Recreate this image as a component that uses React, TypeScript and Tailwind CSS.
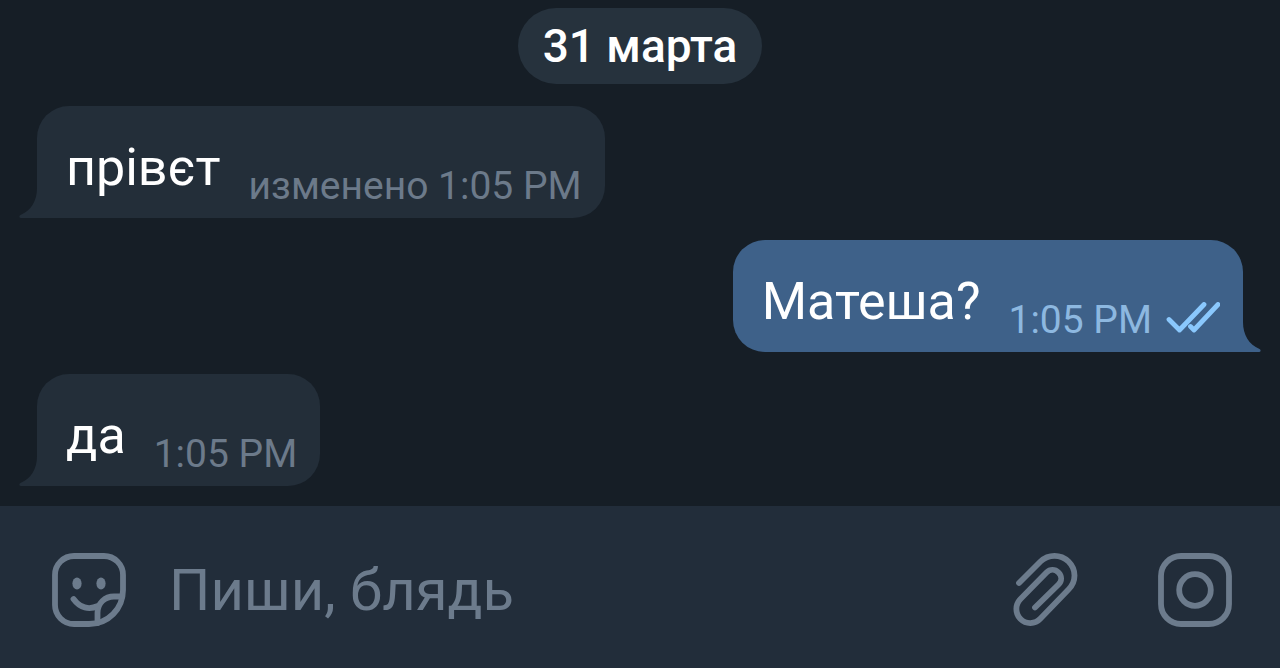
import { useState } from 'react';

interface Message {
  id: number;
  text: string;
  time: string;
  own?: boolean;
  edited?: boolean;
}

const messages: Message[] = [
  { id: 1, text: 'прівєт', time: '1:05 PM', edited: true },
  { id: 2, text: 'Матеша?', time: '1:05 PM', own: true },
  { id: 3, text: 'да', time: '1:05 PM' },
];

function ReadChecks() {
  return (
    <svg width="54" height="32" viewBox="0 0 54 32" fill="none" stroke="#8ac8fd" strokeWidth="4.8" strokeLinecap="round" strokeLinejoin="round" className="mb-[18px] ml-3.5" role="img" aria-label="Прочитано">
      <path d="M3 17.5L13.5 28L38 2.5" />
      <path d="M24.5 24.5L28 28L52 2.5" />
    </svg>
  );
}

// curved corner hanging off the bottom of a bubble
function Tail({ own }: { own?: boolean }) {
  return (
    <svg width="20" height="42" viewBox="0 0 20 42" fill={own ? '#3e6189' : '#232e39'} aria-hidden="true"
      className={own ? 'absolute bottom-0 left-full -ml-px -scale-x-100' : 'absolute bottom-0 right-full -mr-px'}>
      <path d="M20 0V42H3C1 42 0.8 39.8 2.5 39C13 34.500 19 25 19 12V0Z" />
    </svg>
  );
}

function Bubble({ msg }: { msg: Message }) {
  return (
    <li className={msg.own
      ? 'relative flex items-end self-end mr-[37px] pl-[29px] pr-[23px] rounded-[32px] rounded-br-none bg-[#3e6189]'
      : 'relative flex items-end self-start ml-[37px] pl-[29px] pr-[23px] rounded-[32px] rounded-bl-none bg-[#232e39]'}>
      <Tail own={msg.own} />
      <p className="pt-8 pb-5 text-[52px] leading-[60px] text-white">{msg.text}</p>
      <span className={msg.own
        ? 'ml-7 pb-2 text-[39px] leading-[48px] text-[#8db8e0]'
        : 'ml-7 pb-2 text-[39px] leading-[48px] text-[#6c7a8a]'}>
        {msg.edited && 'изменено '}{msg.time}
      </span>
      {msg.own && <ReadChecks />}
    </li>
  );
}

function StickerIcon() {
  return (
    <svg width="76" height="76" viewBox="0 0 76 76" fill="none" stroke="currentColor" strokeWidth="5.8" strokeLinecap="round" strokeLinejoin="round">
      <path d="M23 4H53A19 19 0 0 1 72 23V38C72 57 57 72 38 72H23A19 19 0 0 1 4 53V23A19 19 0 0 1 23 4Z" />
      <path d="M46.500 71V61C46.500 51 54 44.500 63 44.500H71" />
      <path d="M22.500 47C29 56 38 58 47 54" />
      <ellipse cx="26" cy="31.500" rx="4.600" ry="6" fill="currentColor" stroke="none" />
      <ellipse cx="50" cy="31.500" rx="4.600" ry="6" fill="currentColor" stroke="none" />
    </svg>
  );
}

function ClipIcon() {
  return (
    <svg width="68" height="76" viewBox="0 0 68 76" fill="none" stroke="currentColor" strokeWidth="5.8" strokeLinecap="round" strokeLinejoin="round">
      <path d="M7 31L28.500 9.500C36.500 2 48.500 2 56.500 9.500C64.500 17.500 64.500 29.500 56.500 37.500L28.500 66.500C23 72.500 14 72.500 8.500 67C3 61.500 3 52.500 8.500 47L34.500 20.500C38 17 43 17 46.500 20.500C50 24 50 29 46.500 32.500L23 55.500" />
    </svg>
  );
}

function CameraIcon() {
  return (
    <svg width="76" height="76" viewBox="0 0 76 76" fill="none" stroke="currentColor" strokeWidth="5.8">
      <rect x="4" y="4" width="68" height="68" rx="20" />
      <circle cx="38" cy="38" r="15.800" />
    </svg>
  );
}

export default function App() {
  const [draft, setDraft] = useState('');

  return (
    <div className="flex flex-col min-h-screen bg-[#161e26] font-['Roboto',sans-serif]">
      <main className="flex-1 flex flex-col pt-2 pb-5">
        <h2 className="self-center px-[25px] py-2 rounded-full bg-[#26323d] text-[46px] leading-[60px] font-medium text-white">31 марта</h2>
        <ul className="flex flex-col gap-[22px] mt-[22px]">
          {messages.map(m => <Bubble key={m.id} msg={m} />)}
        </ul>
      </main>

      <form onSubmit={e => e.preventDefault()} className="flex items-center h-[162px] pt-1.5 pl-[51px] pr-[47px] bg-[#222d3a] text-[#6c7b8c]">
        <button type="button" aria-label="Стикеры"><StickerIcon /></button>
        <input type="text" aria-label="Сообщение" placeholder="Пиши, блядь" value={draft} onChange={e => setDraft(e.target.value)}
          className="flex-1 min-w-0 ml-[42px] text-[58px] leading-[68px] text-white outline-none placeholder:text-[#6c7b8c]" />
        <button type="button" aria-label="Прикрепить файл"><ClipIcon /></button>
        <button type="button" aria-label="Камера" className="ml-[77px]"><CameraIcon /></button>
      </form>
    </div>
  );
}
